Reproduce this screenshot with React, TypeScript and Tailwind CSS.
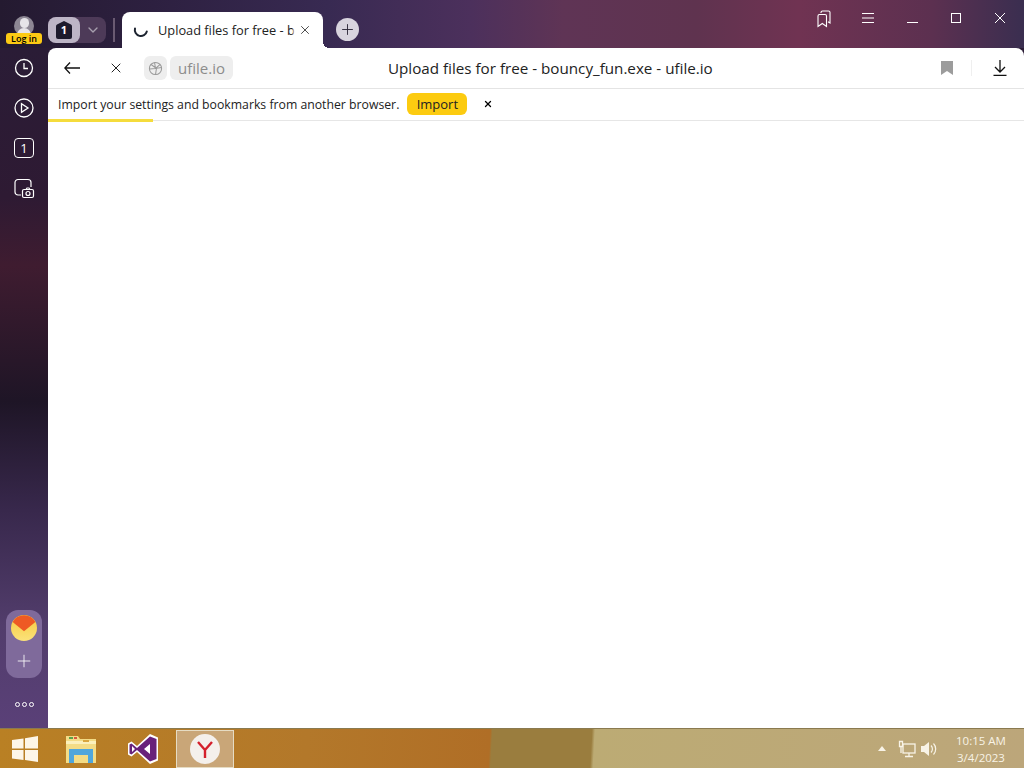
import { ChevronDown, Plus, X } from 'lucide-react'

const icon = 'w-6 h-6 stroke-white fill-none'

function SideIcon({ children }: { children: React.ReactNode }) {
	return <div className="h-10 flex items-center justify-center">{children}</div>
}

function TopBar() {
	return (
		<div className="h-12 flex bg-[linear-gradient(90deg,#241a30_0%,#2d2040_15%,#382a52_32%,#4c305c_46%,#5f3455_55%,#5f334f_68%,#703352_78%,#5c3050_91%,#3a2e50_100%)]">
			<div className="w-12 relative flex justify-center pt-[16px]">
				<div className="w-5 h-5 rounded-full bg-[#8d8794] overflow-hidden flex flex-col items-center">
					<div className="w-[9px] h-[10px] mt-[2px] rounded-full bg-[#e6e4e8]" />
					<div className="w-[14px] h-[8px] rounded-t-full bg-[#e6e4e8]" />
				</div>
				<div className="absolute left-[6px] top-[33px] w-9 h-[11px] rounded-[3px] bg-[#fcca14] text-[9px] leading-[11px] font-semibold text-center text-black">
					Log in
				</div>
			</div>

			<div className="flex h-[26px] mt-[17px] rounded-lg bg-[#4d3a58] w-[58px]">
				<div className="w-8 rounded-lg bg-[#bdb5c6] flex items-center justify-center">
					<div className="w-[18px] h-[18px] relative flex items-center justify-center">
						<svg viewBox="0 0 18 18" className="absolute inset-0 w-[18px] h-[18px] fill-[#1d1a2c]">
							<path d="M9 0l7 3.500a2 2 0 0 1 1 1.700V16a2 2 0 0 1-2 2H3a2 2 0 0 1-2-2V5.200a2 2 0 0 1 1-1.700Z" />
						</svg>
						<span className="relative text-white text-[11px] leading-[18px] font-bold">1</span>
					</div>
				</div>
				<div className="flex-1 flex items-center justify-center">
					<ChevronDown className="w-4 h-4 text-[#a79fae]" strokeWidth={2} />
				</div>
			</div>
			<div className="w-[2px] h-6 mt-[18px] ml-[7px] mr-[7px] bg-[#6a5a72]" />

			<div className="w-[201px] h-9 mt-3 rounded-t-lg bg-white flex items-center pl-[11px] pr-[11px] relative">
				<svg viewBox="0 0 16 16" className="w-4 h-4 shrink-0 fill-none stroke-[#1d2430]" strokeWidth="2" strokeLinecap="round">
					<path d="M2 6.500a6 6 0 0 0 11.800 3" />
				</svg>
				<div className="ml-[9px] pt-px w-[137px] overflow-hidden whitespace-nowrap text-[12.8px] text-[#222] relative">
					Upload files for free - bouncy_fun.exe
					<div className="absolute right-0 top-0 bottom-0 w-[3px] bg-[linear-gradient(90deg,transparent,white)]" />
				</div>
				<X className="w-[14px] h-[14px] ml-[3px] text-[#333]" strokeWidth={1.5} />
				<div className="absolute -right-[6px] bottom-0 w-[6px] h-[6px] bg-[radial-gradient(circle_at_100%_0,transparent_6px,white_6px)]" />
			</div>

			<div className="ml-[13px] mt-[18px] w-[23px] h-[23px] rounded-full bg-[#d8d4de] flex items-center justify-center">
				<Plus className="w-[17px] h-[17px] text-[#2b2535]" strokeWidth={1.3} />
			</div>

			<div className="ml-auto flex text-white">
				<div className="w-11 flex justify-center pt-[10px]">
					<svg viewBox="0 0 16 18" className="w-4 h-[18px] fill-none stroke-white" strokeWidth="1.100">
						<path d="M5 3V2.500a1.500 1.500 0 0 1 1.500-1.500h6A1.500 1.500 0 0 1 14 2.500V13l-2-1.300" />
						<path d="M2 6a1.500 1.500 0 0 1 1.500-1.500h5.500A1.500 1.500 0 0 1 10.500 6v10.500L6.300 13.500 2 16.500Z" />
					</svg>
				</div>
				<div className="w-11 flex justify-center pt-[12px]">
					<svg viewBox="0 0 12 12" className="w-3 h-3 stroke-white" strokeWidth="1"><path d="M0 1.500h12M0 6h12M0 10.500h12" /></svg>
				</div>
				<div className="w-11 flex justify-center pt-[22px]"><div className="w-[11px] h-px bg-white" /></div>
				<div className="w-11 flex justify-center pt-[13px]"><div className="w-[10px] h-[10px] border border-white" /></div>
				<div className="w-[46px] flex justify-center pt-[12px] pr-[2px]">
					<svg viewBox="0 0 12 12" className="w-3 h-3 stroke-white" strokeWidth="1"><path d="M1 1l10 10M11 1L1 11" /></svg>
				</div>
			</div>
		</div>
	)
}

function Sidebar() {
	return (
		<div className="w-12 flex flex-col items-center">
			<div className="flex flex-col">
				<SideIcon>
					<svg viewBox="0 0 24 24" className={icon} strokeWidth="1.300">
						<circle cx="12" cy="12" r="8.500" />
						<path d="M12 7v5.500h4" />
					</svg>
				</SideIcon>
				<SideIcon>
					<svg viewBox="0 0 24 24" className={icon} strokeWidth="1.300">
						<circle cx="12" cy="12" r="9" />
						<path d="M9.500 7.800v8.400l6.500-4.200Z" />
					</svg>
				</SideIcon>
				<SideIcon>
					<div className="w-[20px] h-[20px] rounded-[4px] border border-white text-white text-[13px] leading-[18px] text-center">1</div>
				</SideIcon>
				<SideIcon>
					<svg viewBox="0 0 24 24" className={icon} strokeWidth="1.200">
						<path d="M9 19H6a3 3 0 0 1-3-3V6.500a3 3 0 0 1 3-3h10a3 3 0 0 1 3 3V11" />
						<rect x="10.500" y="13.500" width="11" height="8" rx="1.500" />
						<circle cx="16" cy="17.500" r="2" />
						<path d="M14 13.500l1-1.500h2l1 1.500" />
					</svg>
				</SideIcon>
			</div>

			<div className="mt-auto w-9 h-[68px] rounded-xl bg-[#7f6a9b] flex flex-col items-center pt-[5px]">
				<svg viewBox="0 0 24 24" className="w-[26px] h-[26px]">
					<defs>
						<linearGradient id="mailBody" x1="0" y1="0" x2="0" y2="1">
							<stop offset="0" stopColor="#f7c93e" />
							<stop offset="1" stopColor="#fbe27a" />
						</linearGradient>
					</defs>
					<circle cx="12" cy="12" r="12" fill="url(#mailBody)" />
					<path d="M1.500 6.500A12 12 0 0 1 22.500 6.500L12 15Z" fill="#ee5a24" />
				</svg>
				<Plus className="w-[20px] h-[20px] mt-[10px] text-white" strokeWidth={1} />
			</div>

			<div className="h-[50px] pt-[2px] flex items-center gap-[2px]">
				<div className="w-[5px] h-[5px] rounded-full border border-white" />
				<div className="w-[5px] h-[5px] rounded-full border border-white" />
				<div className="w-[5px] h-[5px] rounded-full border border-white" />
			</div>
		</div>
	)
}

function Content() {
	return (
		<div className="flex-1 flex flex-col bg-white rounded-t-lg">
			<div className="h-[41px] shrink-0 border-b border-[#e4e4e4] flex items-center relative">
				<svg viewBox="0 0 16 12" className="w-4 h-3 ml-[16px] fill-none stroke-[#111]" strokeWidth="1.300">
					<path d="M0.800 6H16M6 0.500L0.800 6 6 11.500" />
				</svg>
				<X className="w-4 h-4 ml-[28px] text-[#111]" strokeWidth={1.4} />
				<div className="ml-[20px] w-[23px] h-6 rounded-md bg-[#eeeeee] flex items-center justify-center">
					<svg viewBox="0 0 16 16" className="w-[15px] h-[15px] fill-none stroke-[#9a9a9a]" strokeWidth="1.100">
						<circle cx="8" cy="8" r="6.500" />
						<path d="M3 3.500l6 4.500-1 6.500M13 3.500L8 8 1.500 8.500M7 1.500L8 8l6.500-1" />
					</svg>
				</div>
				<div className="ml-[3px] h-6 px-[8px] rounded-md bg-[#eeeeee] text-[15px] leading-6 text-[#8c8c8c]">ufile.io</div>
				<div className="absolute left-[340px] top-[9px] text-[15.2px] leading-[22px] text-[#222] whitespace-nowrap">
					Upload files for free - bouncy_fun.exe - ufile.io
				</div>
				<div className="ml-auto flex items-center">
					<svg viewBox="0 0 12 14" className="w-3 h-[14px] fill-[#9c9c9c]"><path d="M0 0h12v14L6 10 0 14Z" /></svg>
					<div className="w-px h-4 ml-[18px] bg-[#efefef]" />
					<svg viewBox="0 0 14 16" className="w-[14px] h-4 ml-[21px] mr-[17px] fill-none stroke-[#111]" strokeWidth="1.300">
						<path d="M7 0v12M2 7l5 5 5-5M0.500 15.300h13" />
					</svg>
				</div>
			</div>

			<div className="h-8 shrink-0 border-b border-[#e6e6e6] flex items-center pl-[10px] relative text-[12.25px] text-[#222]">
				<span className="whitespace-nowrap pt-px">Import your settings and bookmarks from another browser.</span>
				<div className="ml-2 mb-px w-[60px] h-[22px] rounded-md bg-[#fccb10] text-center leading-[22px] text-[#222] text-[13px]">Import</div>
				<X className="w-[10px] h-[10px] ml-4 mb-px text-black" strokeWidth={3} />
				<div className="absolute left-0 -bottom-[2px] w-[105px] h-[3px] bg-[#f5dc3c]" />
			</div>

			<div className="flex-1" />
		</div>
	)
}

function Taskbar() {
	return (
		<div className="h-10 flex items-center border-t border-[#8a7a50] bg-[linear-gradient(93deg,#b98024_0%,#b3782a_30%,#b06e26_47.800%,#9a7d3e_48%,#9a7d3e_57.700%,#bcab74_58%,#bca67a_100%)]">
			<div className="w-[50px] flex justify-center">
				<svg viewBox="0 0 26 26" className="w-[26px] h-[26px] fill-[#fdf6e8]">
					<path d="M0 4l11.500-1.600v10H0ZM13 2.200L26 0v12.400H13ZM0 14h11.500v10L0 22.400ZM13 14h13v12l-13-2Z" />
				</svg>
			</div>
			<div className="w-[62px] flex justify-center">
				<svg viewBox="0 0 32 30" className="w-8 h-[30px]">
					<path d="M1 2h12l2 3h16v24H1Z" fill="#f3dc86" />
					<path d="M1 7h30v3H1Z" fill="#fbf0bc" />
					<rect x="4" y="3" width="4" height="2" fill="#5aa34a" />
					<rect x="9" y="3" width="3" height="2" fill="#d9563f" />
					<rect x="18" y="6" width="6" height="2" fill="#d9a63f" />
					<path d="M4 29V15h24v14h-5v-8H9v8Z" fill="#4fa6dc" />
				</svg>
			</div>
			<div className="w-[62px] flex justify-center">
				<svg viewBox="0 0 32 32" className="w-8 h-8">
					<path d="M23 1l8 3.500v23L23 31 10 19l-5.500 4.500L1 21.500v-11L4.500 8.500 10 13Z" fill="#fff" />
					<path d="M23 3.500l6.500 2.500v20l-6.500 2.500L10 17l-5.500 4.500-2-1v-9l2-1L10 15Zm0 7.500-6 5 6 5ZM5 13v6l3-3Z" fill="#68217a" fillRule="evenodd" />
				</svg>
			</div>
			<div className="ml-[2px] w-[58px] h-[38px] border border-[#e6dcc4] bg-[#c9a678] flex items-center justify-center">
				<div className="w-[30px] h-[30px] rounded-full bg-[#f4f0ec] flex items-center justify-center">
					<svg viewBox="0 0 20 20" className="w-5 h-5 fill-none stroke-[#d4202c]" strokeWidth="2.400"><path d="M3 3l7 8 7-8M10 11v8" /></svg>
				</div>
			</div>

			<div className="ml-auto flex items-center">
				<div className="w-0 h-0 border-x-[4px] border-x-transparent border-b-[5px] border-b-[#f8f3e6]" />
				<svg viewBox="0 0 18 18" className="w-[18px] h-[18px] ml-[12px] fill-none stroke-[#f8f3e6]" strokeWidth="1.300">
					<rect x="5" y="4" width="12" height="9" />
					<path d="M11 13v3M7 16.500h8M1.500 1.500h3v5h-3ZM3 6.500V13" />
				</svg>
				<svg viewBox="0 0 18 18" className="w-[18px] h-[18px] ml-[4px] fill-[#f8f3e6]">
					<path d="M1 6h3l5-4v14l-5-4H1Z" />
					<path d="M11 5.500a5 5 0 0 1 0 7M13.500 3.500a8 8 0 0 1 0 11" className="fill-none stroke-[#f8f3e6]" strokeWidth="1.200" />
				</svg>
				<div className="w-[86px] pt-[1px] text-center text-[11.5px] leading-[17px] text-[#f8f3e6]">
					<div>10:15 AM</div>
					<div>3/4/2023</div>
				</div>
			</div>
		</div>
	)
}

export default function App() {
	return (
		<div className="w-full h-[768px] flex flex-col overflow-hidden font-['Open_Sans',sans-serif]">
			<div className="flex-1 flex flex-col">
				<TopBar />
				<div className="flex-1 flex bg-[linear-gradient(180deg,#2a1c36_0%,#2e1a33_22%,#3f1c30_32%,#1e1526_52%,#38284c_68%,#523d6c_85%,#5a4078_100%)]">
					<Sidebar />
					<Content />
				</div>
			</div>
			<Taskbar />
		</div>
	)
}
